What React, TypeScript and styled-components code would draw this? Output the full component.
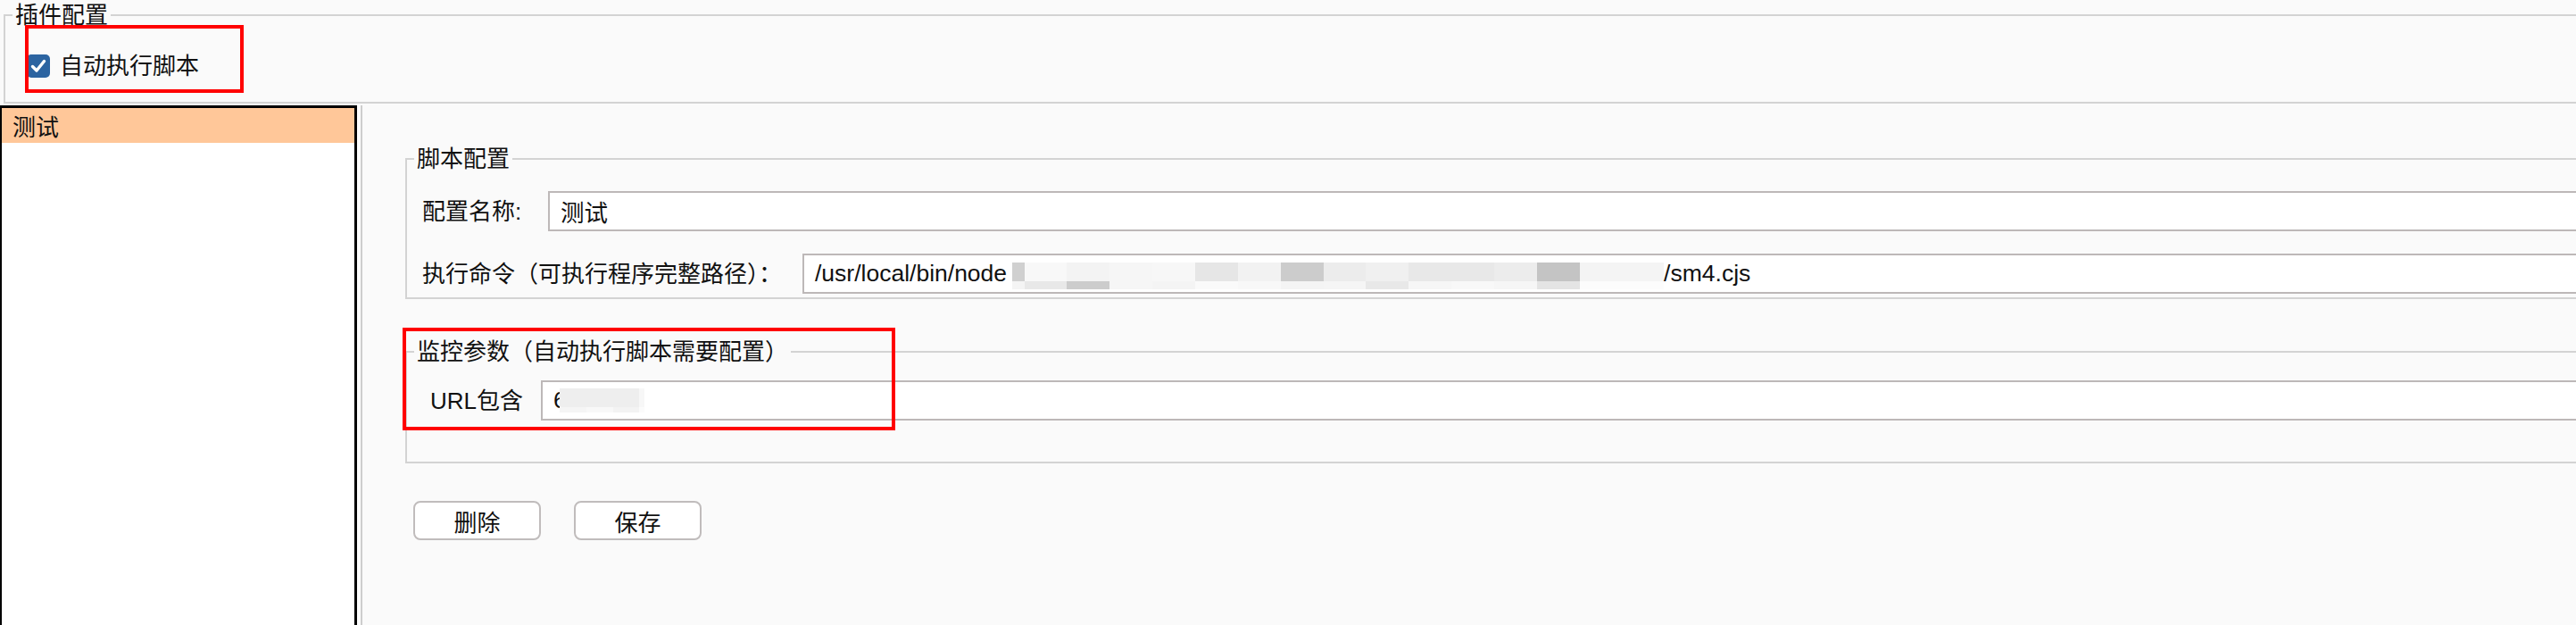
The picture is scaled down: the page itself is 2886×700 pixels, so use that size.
import React from "react";
import styled, { createGlobalStyle } from "styled-components";

const GlobalStyle = createGlobalStyle`
  html, body { margin: 0; padding: 0; background: #fafafa; }
  body {
    font-family: "Liberation Sans", "Noto Sans CJK SC", sans-serif;
    color: #111;
    overflow: hidden;
  }
  * { box-sizing: border-box; }
`;

const Page = styled.div`
  width: 100%;
  height: 700px;
  overflow: hidden;
  display: flex;
  flex-direction: column;
  background: #fafafa;
`;

const Group = styled.fieldset`
  margin: 0;
  padding: 0;
  border: 2px solid #d3d3d3;
  min-width: 0;
`;

const TopGroup = styled(Group)`
  margin: 2px -40px 0 4px;
`;

const Legend = styled.legend`
  margin-left: 8px;
  padding: 0 3px;
  font-size: 26px;
  line-height: 30px;
  color: #111;
`;

const GroupBody = styled.div<{ $pad: string }>`
  padding: ${(p) => p.$pad};
  display: flex;
  flex-direction: column;
  gap: 25px;
`;

const CheckRow = styled.label`
  position: relative;
  display: flex;
  align-items: center;
  gap: 11px;
  height: 30px;
  font-size: 26px;
  line-height: 30px;
`;

const CheckBox = styled.span`
  width: 26px;
  height: 26px;
  border-radius: 5px;
  background: #2c64a1;
  display: inline-flex;
  align-items: center;
  justify-content: center;
`;

const Annotation = styled.div<{ $l: number; $t: number; $w: number; $h: number }>`
  position: absolute;
  left: ${(p) => p.$l}px;
  top: ${(p) => p.$t}px;
  width: ${(p) => p.$w}px;
  height: ${(p) => p.$h}px;
  border: 4px solid #ff0000;
  pointer-events: none;
`;

const Main = styled.div`
  flex: 1;
  display: flex;
  margin-top: 2px;
  min-height: 0;
`;

const ListPanel = styled.div`
  width: 400px;
  flex: none;
  background: #ffffff;
  border-style: solid;
  border-color: #000;
  border-width: 3px 3px 0 2px;
`;

const ListItem = styled.div<{ $selected?: boolean }>`
  height: 39px;
  display: flex;
  align-items: center;
  padding-left: 12px;
  font-size: 26px;
  background: ${(p) => (p.$selected ? "#ffc799" : "transparent")};
`;

const Splitter = styled.div`
  width: 6px;
  flex: none;
  background: #fdfdfd;
  border-right: 2px solid #cdcdcd;
`;

const DetailPanel = styled.div`
  flex: 1;
  min-width: 0;
  padding: 45px 0 0 48px;
  display: flex;
  flex-direction: column;
`;

const DetailGroup = styled(Group)`
  margin-right: -40px;
`;

const AnnotatedArea = styled.div`
  position: relative;
  margin-top: 44px;
  margin-right: -40px;
  display: flex;
  flex-direction: column;
`;

const FieldRow = styled.div`
  display: flex;
  align-items: center;
`;

const FieldLabel = styled.span<{ $width: number }>`
  width: ${(p) => p.$width}px;
  flex: none;
  font-size: 26px;
  line-height: 30px;
  white-space: nowrap;
`;

const TextField = styled.div`
  flex: 1;
  height: 45px;
  min-width: 0;
  display: flex;
  align-items: center;
  padding-left: 12px;
  background: #ffffff;
  border: 2px solid #bdb8b8;
  font-size: 26.5px;
  white-space: nowrap;
  overflow: hidden;
`;

const Mosaic = styled.span<{ $shift: number; $lift: number }>`
  display: inline-flex;
  margin-left: ${(p) => p.$shift}px;
  margin-top: ${(p) => p.$lift}px;
  flex: none;
`;

const MosaicColumn = styled.span`
  display: flex;
  flex-direction: column;
`;

const MosaicCell = styled.span<{ $h: number }>`
  display: block;
  height: ${(p) => p.$h}px;
`;

const ButtonRow = styled.div`
  display: flex;
  gap: 37px;
  margin-top: 42px;
  padding-left: 9px;
`;

const Button = styled.button`
  width: 143px;
  height: 44px;
  background: #ffffff;
  border: 2px solid #c0bcbc;
  border-radius: 8px;
  font-family: "Liberation Sans", "Noto Sans CJK SC", sans-serif;
  font-size: 26px;
  color: #111;
  padding: 0;
`;

type Cell = { w: number; top: string; bottom: string };

const pathMosaic: Cell[] = [
  { w: 14, top: "#d0d0d0", bottom: "#f4f4f4" },
  { w: 47, top: "#f8f8f8", bottom: "#e8e8e8" },
  { w: 48, top: "#f3f3f3", bottom: "#cccccc" },
  { w: 48, top: "#f6f6f6", bottom: "#f6f6f6" },
  { w: 48, top: "#f7f7f7", bottom: "#f4f4f4" },
  { w: 48, top: "#e6e6e6", bottom: "#fafafa" },
  { w: 48, top: "#f2f2f2", bottom: "#f8f8f8" },
  { w: 48, top: "#cccccc", bottom: "#f4f4f4" },
  { w: 47, top: "#ececec", bottom: "#f5f5f5" },
  { w: 48, top: "#f0f0f0", bottom: "#e8e8e8" },
  { w: 48, top: "#e8e8e8", bottom: "#f6f6f6" },
  { w: 48, top: "#e8e8e8", bottom: "#f8f8f8" },
  { w: 48, top: "#ececec", bottom: "#f6f6f6" },
  { w: 48, top: "#c4c4c4", bottom: "#e4e4e4" },
  { w: 94, top: "#f4f4f4", bottom: "#fcfcfc" },
];

const urlMosaic: Cell[] = [
  { w: 30, top: "#eeeeee", bottom: "#f5f5f5" },
  { w: 30, top: "#eeeeee", bottom: "#f8f8f8" },
  { w: 29, top: "#eeeeee", bottom: "#f3f3f3" },
  { w: 6, top: "#f7f7f7", bottom: "#fbfbfb" },
];

function Redacted({
  cells,
  topH,
  bottomH,
  shift,
  lift,
}: {
  cells: Cell[];
  topH: number;
  bottomH: number;
  shift: number;
  lift: number;
}) {
  return (
    <Mosaic $shift={shift} $lift={lift}>
      {cells.map((c, i) => (
        <MosaicColumn key={i} style={{ width: c.w }}>
          <MosaicCell $h={topH} style={{ background: c.top }} />
          <MosaicCell $h={bottomH} style={{ background: c.bottom }} />
        </MosaicColumn>
      ))}
    </Mosaic>
  );
}

function CheckMark() {
  return (
    <svg width="22" height="22" viewBox="0 0 22 22">
      <path
        d="M4.5 11.5 L9 16 L17.5 5.5"
        fill="none"
        stroke="#ffffff"
        strokeWidth="3.4"
        strokeLinecap="round"
        strokeLinejoin="round"
      />
    </svg>
  );
}

export default function App() {
  return (
    <>
      <GlobalStyle />
      <Page>
        <TopGroup>
          <Legend>插件配置</Legend>
          <GroupBody $pad="27px 0 25px 24px">
            <CheckRow>
              <CheckBox>
                <CheckMark />
              </CheckBox>
              自动执行脚本
              <Annotation $l={-2} $t={-31} $w={245} $h={76} />
            </CheckRow>
          </GroupBody>
        </TopGroup>
        <Main>
          <ListPanel>
            <ListItem $selected>测试</ListItem>
          </ListPanel>
          <Splitter />
          <DetailPanel>
            <DetailGroup>
              <Legend>脚本配置</Legend>
              <GroupBody $pad="21px 0 4px 17px">
                <FieldRow>
                  <FieldLabel $width={141}>配置名称:</FieldLabel>
                  <TextField>测试</TextField>
                </FieldRow>
                <FieldRow>
                  <FieldLabel $width={426}>执行命令（可执行程序完整路径）：</FieldLabel>
                  <TextField>
                    /usr/local/bin/node
                    <Redacted cells={pathMosaic} topH={21} bottomH={9} shift={6} lift={4} />
                    /sm4.cjs
                  </TextField>
                </FieldRow>
              </GroupBody>
            </DetailGroup>
            <AnnotatedArea>
              <Group>
                <Legend>监控参数（自动执行脚本需要配置）</Legend>
                <GroupBody $pad="17px 0 46px 26px">
                  <FieldRow>
                    <FieldLabel $width={124}>URL包含</FieldLabel>
                    <TextField>
                      6
                      <Redacted cells={urlMosaic} topH={21} bottomH={6} shift={-8} lift={0} />
                    </TextField>
                  </FieldRow>
                </GroupBody>
              </Group>
              <Annotation $l={-3} $t={-12} $w={552} $h={115} />
            </AnnotatedArea>
            <ButtonRow>
              <Button>删除</Button>
              <Button>保存</Button>
            </ButtonRow>
          </DetailPanel>
        </Main>
      </Page>
    </>
  );
}
